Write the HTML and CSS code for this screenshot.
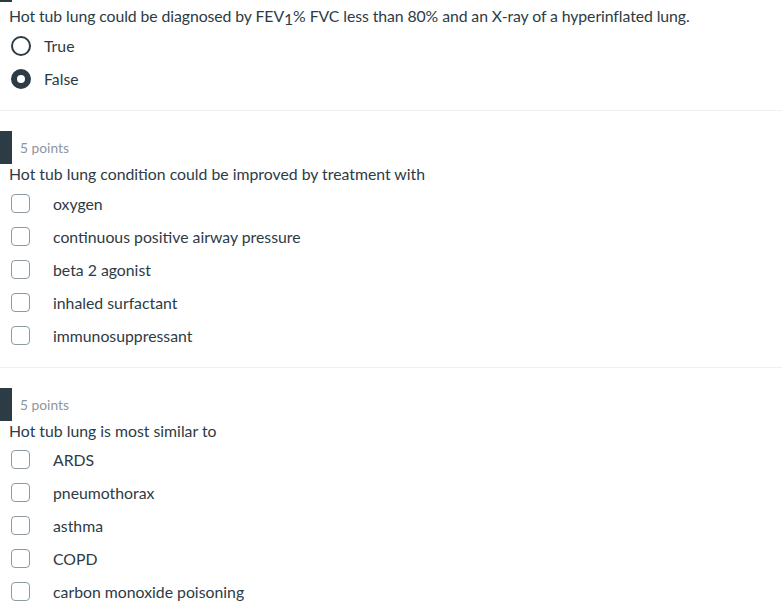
FILE: index.html
```html
<!DOCTYPE html>
<html>
<head>
<meta charset="utf-8">
<link rel="stylesheet" href="styles.css">
</head>
<body>
<div class="top-tab"></div>
<section class="question first">
  <div class="q-text">Hot tub lung could be diagnosed by FEV<sub>1</sub>% FVC less than 80% and an X-ray of a hyperinflated lung.</div>
  <div class="options radios">
    <div class="opt"><span class="radio"></span><span class="label">True</span></div>
    <div class="opt"><span class="radio checked"></span><span class="label">False</span></div>
  </div>
</section>
<hr class="divider">
<section class="question">
  <div class="header"><span class="tab"></span><span class="points">5 points</span></div>
  <div class="q-text">Hot tub lung condition could be improved by treatment with</div>
  <div class="options checks">
    <div class="opt"><span class="box"></span><span class="label">oxygen</span></div>
    <div class="opt"><span class="box"></span><span class="label">continuous positive airway pressure</span></div>
    <div class="opt"><span class="box"></span><span class="label">beta 2 agonist</span></div>
    <div class="opt"><span class="box"></span><span class="label">inhaled surfactant</span></div>
    <div class="opt"><span class="box"></span><span class="label">immunosuppressant</span></div>
  </div>
</section>
<hr class="divider">
<section class="question compact">
  <div class="header"><span class="tab"></span><span class="points">5 points</span></div>
  <div class="q-text">Hot tub lung is most similar to</div>
  <div class="options checks">
    <div class="opt"><span class="box"></span><span class="label">ARDS</span></div>
    <div class="opt"><span class="box"></span><span class="label">pneumothorax</span></div>
    <div class="opt"><span class="box"></span><span class="label">asthma</span></div>
    <div class="opt"><span class="box"></span><span class="label">COPD</span></div>
    <div class="opt"><span class="box"></span><span class="label">carbon monoxide poisoning</span></div>
  </div>
</section>
</body>
</html>
```
FILE: styles.css
```css
html, body {
  margin: 0;
  padding: 0;
  background: #ffffff;
}
body {
  font-family: Lato, "Liberation Sans", sans-serif;
  font-size: 15.8px;
  color: #2d3b45;
  width: 782px;
  overflow: hidden;
}
.top-tab {
  width: 12px;
  height: 2px;
  background: #2d3b45;
}
.q-text {
  padding-left: 9px;
  line-height: 20px;
  height: 20px;
}
.first .q-text {
  margin-top: 4px;
  letter-spacing: -0.08px;
}
.q-text sub {
  font-size: 15.8px;
  vertical-align: -3px;
  line-height: 0;
}
.options {
  display: flex;
  flex-direction: column;
  margin-top: 3px;
}
.compact .options {
  margin-top: 2px;
}
.opt {
  display: flex;
  align-items: center;
  height: 33px;
}
.radio {
  box-sizing: border-box;
  width: 20px;
  height: 20px;
  border-radius: 50%;
  border: 2.5px solid #2d3b45;
  margin-left: 11px;
  margin-right: 13px;
  flex: none;
}
.radio.checked {
  border: 6.5px solid #2d3b45;
  background: #ffffff;
}
.box {
  box-sizing: border-box;
  width: 19px;
  height: 19px;
  border: 1px solid #8f99a0;
  border-radius: 4px;
  margin-left: 11px;
  margin-right: 23px;
  flex: none;
}
.divider {
  border: 0;
  border-top: 1px solid #eef0f1;
  margin: 15px 0 20px 0;
  height: 0;
}
.header {
  display: flex;
  align-items: center;
  height: 33px;
}
.tab {
  width: 12px;
  height: 33px;
  background: #2d3b45;
  margin-right: 8px;
}
.points {
  font-size: 13.8px;
  color: #8b969e;
}
```
